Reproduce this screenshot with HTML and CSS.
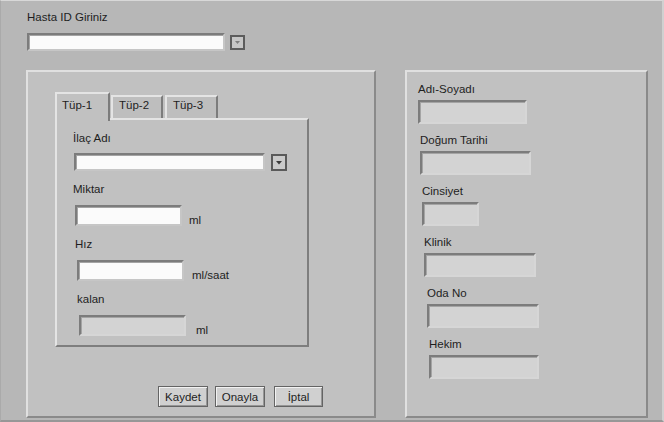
FILE: index.html
```html
<!DOCTYPE html>
<html>
<head>
    <meta charset="utf-8">
    <title>Hasta İlaç Takibi</title>
    <link rel="stylesheet" href="styles.css">
</head>
<body>
<div class="window">
    <div class="id-row">
        <span class="lbl">Hasta ID Giriniz</span>
        <div class="combo">
            <div class="field white id-field"></div>
            <span class="drop small"><svg width="15" height="15" viewBox="0 0 15 15"><rect x="1" y="1" width="13" height="13" fill="#c6c6c6" stroke="#5c5c5c" stroke-width="2"/><path d="M5 6h5l-2.5 3z" fill="#7e7e7e"/></svg></span>
        </div>
    </div>

    <div class="main">
        <div class="panel left">
            <div class="tabs">
                <div class="tab-head">
                    <span class="tab active">Tüp-1</span>
                    <span class="tab">Tüp-2</span>
                    <span class="tab third">Tüp-3</span>
                </div>
                <div class="tab-body">
                    <div class="group">
                        <span class="lbl">İlaç Adı</span>
                        <div class="combo">
                            <div class="field white drug-field"></div>
                            <span class="drop"><svg width="16" height="17" viewBox="0 0 16 17"><rect x="1" y="1" width="14" height="15" fill="#cacaca" stroke="#5a5a5a" stroke-width="2"/><path d="M5 7h6l-3 3.5z" fill="#3a3a3a"/></svg></span>
                        </div>
                    </div>
                    <div class="group">
                        <span class="lbl">Miktar</span>
                        <div class="input-row">
                            <div class="field white dose"></div>
                            <span class="unit">ml</span>
                        </div>
                    </div>
                    <div class="group">
                        <span class="lbl">Hız</span>
                        <div class="input-row">
                            <div class="field white dose"></div>
                            <span class="unit">ml/saat</span>
                        </div>
                    </div>
                    <div class="group">
                        <span class="lbl">kalan</span>
                        <div class="input-row">
                            <div class="field dose"></div>
                            <span class="unit">ml</span>
                        </div>
                    </div>
                </div>
            </div>
            <div class="actions">
                <button>Kaydet</button>
                <button>Onayla</button>
                <button class="cancel">İptal</button>
            </div>
        </div>

        <div class="panel right">
            <div class="info"><span class="lbl">Adı-Soyadı</span><div class="field w109"></div></div>
            <div class="info"><span class="lbl">Doğum Tarihi</span><div class="field w111"></div></div>
            <div class="info"><span class="lbl">Cinsiyet</span><div class="field w57"></div></div>
            <div class="info"><span class="lbl">Klinik</span><div class="field w112"></div></div>
            <div class="info"><span class="lbl">Oda No</span><div class="field w112"></div></div>
            <div class="info"><span class="lbl">Hekim</span><div class="field w110"></div></div>
        </div>
    </div>
</div>
</body>
</html>
```

FILE: styles.css
```css
* { box-sizing: border-box; }
html, body { margin: 0; padding: 0; }
body { background: #b7b7b7; font-family: "Liberation Sans", Arial, sans-serif; font-size: 11.5px; color: #1e1e1e; }

.window { width: 664px; height: 422px; overflow: hidden; border-top: 1px solid #d8d8d8; border-left: 1px solid #aaaaaa; border-right: 2px solid #d0d0d0; border-bottom: 2px solid #979797; }

.lbl { display: block; height: 13px; line-height: 13px; white-space: nowrap; }

/* sunken display/input boxes */
.field { border: 2px solid; border-color: #7c7c7c #d6d6d6 #d6d6d6 #7c7c7c; box-shadow: inset 1px 1px 0 #a4a4a4; background: #d3d3d3; height: 24px; }
.field.white { background: #fbfbfb; border-color: #7c7c7c #c6c6c6 #c6c6c6 #7c7c7c; }

.id-row { padding: 10px 0 0 26px; }
.combo { display: flex; align-items: center; gap: 5px; margin-top: 9px; }
.id-field { width: 198px; height: 18px; }
.drop { display: flex; }
.drop svg { display: block; }

.main { display: flex; gap: 29px; margin: 19px 0 0 25px; }

.panel { height: 348px; background: #c1c1c1; border: 2px solid; border-color: #e0e0e0 #8a8a8a #8a8a8a #e0e0e0; }
.panel.left { width: 350px; padding-left: 27px; }
.panel.right { width: 243px; padding: 11px 0 0 11px; }

/* tabs */
.tabs { margin-top: 20px; }
.tab-head { display: flex; align-items: flex-end; height: 26px; }
.tab { width: 52px; height: 23px; margin-left: 1px; padding: 2px 0 0 6px; background: #bebebe; border: 2px solid; border-bottom: none; border-color: #e4e4e4 #7c7c7c #7c7c7c #e4e4e4; }
.tab.active { width: 55px; height: 29px; margin: 0 0 -3px 0; padding: 5px 0 0 5px; background: #c1c1c1; position: relative; z-index: 1; }
.tab.third { width: 53px; margin-left: 2px; }

.tab-body { width: 254px; height: 229px; padding: 12px 0 0 16px; border: 2px solid; border-color: #e4e4e4 #7e7e7e #7e7e7e #e4e4e4; }
.group + .group { margin-top: 12px; }
.group:nth-child(3) { margin-left: 2px; }
.group:nth-child(4) { margin-left: 4px; }
.group .combo { margin-top: 8px; margin-left: 1px; gap: 6px; }
.drug-field { width: 191px; height: 18px; }
.input-row { display: flex; align-items: flex-end; margin-top: 9px; margin-left: 2px; }
.dose { width: 107px; height: 21px; }
.unit { margin-left: 7px; line-height: 12px; }
.group:nth-child(3) .unit { margin-left: 8px; }
.group:nth-child(4) .unit { margin-left: 10px; }

/* buttons */
.actions { display: flex; gap: 7px; margin: 39px 0 0 103px; }
button { width: 50px; height: 21px; padding: 0; font: inherit; color: #1e1e1e; background: #d0d0d0; border: 1px solid #646464; box-shadow: inset 1px 1px 0 #f2f2f2, inset -1px -1px 0 #969696; }
.cancel { width: 49px; margin-left: 2px; }

/* patient info column */
.info + .info { margin-top: 10px; }
.info .field { margin-top: 4px; }
.info:nth-child(2) { margin-left: 2px; }
.info:nth-child(3) { margin-left: 4px; }
.info:nth-child(4) { margin-left: 6px; }
.info:nth-child(5) { margin-left: 9px; }
.info:nth-child(6) { margin-left: 11px; }
.w57 { width: 57px; }
.w109 { width: 109px; }
.w110 { width: 110px; }
.w111 { width: 111px; }
.w112 { width: 112px; }
```
